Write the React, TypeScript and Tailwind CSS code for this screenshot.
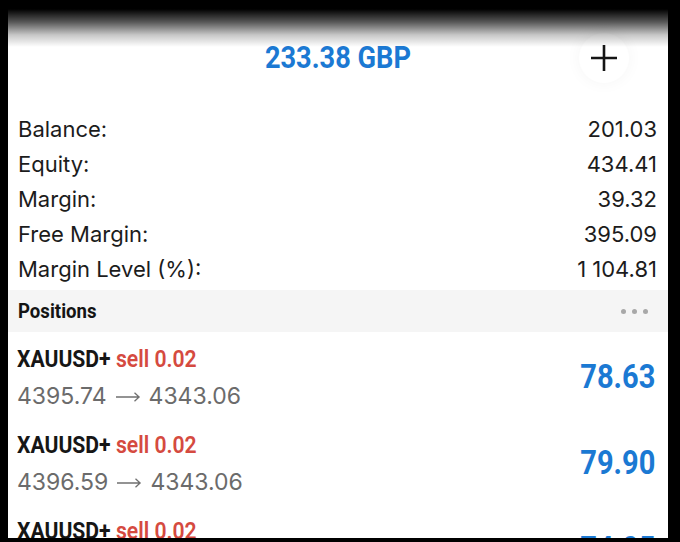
import React from 'react';

// the app uses a condensed face; Roboto squeezed on x stands in for it
const cond = "font-['Roboto',sans-serif] inline-block";

const stats = [
  { label: 'Balance:', value: '201.03' },
  { label: 'Equity:', value: '434.41' },
  { label: 'Margin:', value: '39.32' },
  { label: 'Free Margin:', value: '395.09' },
  { label: 'Margin Level (%):', value: '1 104.81' },
];

const positions = [
  { symbol: 'XAUUSD+', side: 'sell 0.02', open: '4395.74', current: '4343.06', profit: '78.63' },
  { symbol: 'XAUUSD+', side: 'sell 0.02', open: '4396.59', current: '4343.06', profit: '79.90' },
  { symbol: 'XAUUSD+', side: 'sell 0.02', open: '4396.12', current: '4343.06', profit: '74.05' },
];

const Arrow = () => (
  <svg width="26" height="12" viewBox="0 0 26 12" className="mx-[8px] mt-[1px]">
    <path d="M1 6h23M19.5 1.8l4.6 4.2-4.6 4.2" fill="none" stroke="#707070" strokeWidth="1.3" />
  </svg>
);

const PositionRow: React.FC<(typeof positions)[number]> = ({ symbol, side, open, current, profit }) => (
  <div className="h-[86px] shrink-0 flex items-center justify-between pl-[9px] pr-[13px]">
    <div className="flex flex-col mt-[7px]">
      <div className={`${cond} text-[23.5px] leading-[28px] scale-x-[0.9] origin-left whitespace-nowrap`}>
        <span className="font-bold text-[#161616]">{symbol}</span>{' '}
        <span className="font-semibold text-[#d54a40]">{side}</span>
      </div>
      <div className="mt-[7px] font-['Inter',sans-serif] text-[23px] leading-[32px] text-[#6b6b6b] flex items-center">
        <span>{open}</span>
        <Arrow />
        <span>{current}</span>
      </div>
    </div>
    <div className={`${cond} font-bold text-[33px] leading-[40px] text-[#1b79d3] scale-x-[0.88] origin-right mt-[3px]`}>
      {profit}
    </div>
  </div>
);

export default function App() {
  return (
    <div className="relative w-[680px] h-[542px] bg-black overflow-hidden">
      <div className="ml-[8px] mr-[12px] h-[538px] bg-white overflow-hidden flex flex-col">
        {/* balance header */}
        <div className="relative h-[112px] shrink-0 flex items-start justify-center pt-[37px]">
          <div className={`${cond} font-bold text-[32px] leading-[40px] text-[#1b79d3] scale-x-[0.85] origin-center whitespace-nowrap`}>
            233.38 GBP
          </div>
          <div className="absolute right-[39px] top-[33px] w-[50px] h-[50px] rounded-full bg-white shadow-[0_0_16px_rgba(0,0,0,0.045)] flex items-center justify-center">
            <svg width="28" height="28" viewBox="0 0 28 28">
              <path d="M14 1v26M1 14h26" stroke="#151515" strokeWidth="2.6" />
            </svg>
          </div>
        </div>

        {/* account stats */}
        <div className="flex flex-col pl-[10px] pr-[11px] font-['Inter',sans-serif] text-[22px] text-[#1c1c1c]">
          {stats.map((s) => (
            <div key={s.label} className="h-[35px] flex items-center justify-between">
              <span>{s.label}</span>
              <span>{s.value}</span>
            </div>
          ))}
        </div>

        {/* positions header */}
        <div className="mt-[3px] h-[42px] shrink-0 bg-[#f5f5f5] flex items-center justify-between pl-[10px] pr-[20px]">
          <span className={`${cond} font-bold text-[20px] text-[#141414] scale-x-[0.93] origin-left`}>Positions</span>
          <div className="flex gap-[6px]">
            <span className="w-[5px] h-[5px] rounded-full bg-[#a8a8a8]" />
            <span className="w-[5px] h-[5px] rounded-full bg-[#a8a8a8]" />
            <span className="w-[5px] h-[5px] rounded-full bg-[#a8a8a8]" />
          </div>
        </div>

        {positions.map((p, i) => (
          <PositionRow key={i} {...p} />
        ))}
      </div>

      {/* photo vignette at the top */}
      <div className="absolute inset-x-0 top-0 h-[48px] pointer-events-none bg-[linear-gradient(to_bottom,#000_0px,#000_9px,rgba(0,0,0,0.66)_22px,rgba(0,0,0,0.22)_35px,rgba(0,0,0,0)_47px)]" />
    </div>
  );
}
